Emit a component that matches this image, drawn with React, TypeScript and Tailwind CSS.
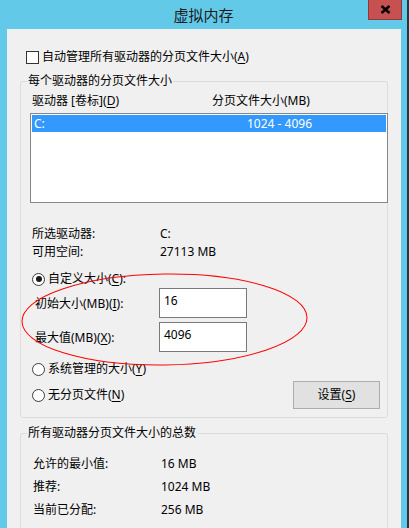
import React from "react";

const U = ({ c }: { c: string }) => <span className="underline underline-offset-[2px] decoration-1">{c}</span>;

function Radio({ checked }: { checked?: boolean }) {
  return (
    <span className="w-[13px] h-[13px] rounded-full border border-[#3c3c3c] bg-white flex items-center justify-center shrink-0">
      {checked && <span className="w-[6px] h-[6px] rounded-full bg-[#1a1a1a]" />}
    </span>
  );
}

export default function App() {
  return (
    <div className="relative w-[409px] h-[528px] overflow-hidden bg-[#63c9e9] border-r-2 border-[#26343d] flex flex-col text-[12px] leading-[16px] text-black font-['Noto_Sans','Noto_Sans_CJK_SC',sans-serif]">
      {/* title bar */}
      <div className="h-[29px] shrink-0 flex items-center justify-center text-[15px] text-[#1b1b1b] font-['Noto_Sans_CJK_SC',sans-serif]">
        虚拟内存
      </div>
      <div className="absolute top-0 right-[5px] w-[34px] h-[20px] bg-[#c75050] border border-t-0 border-[#8c3a3a] flex items-center justify-center">
        <svg width="11" height="9" viewBox="0 0 11 9">
          <path d="M1.5 1 L9.5 8 M9.5 1 L1.5 8" stroke="#000" strokeWidth="2.4" strokeLinecap="butt" />
        </svg>
      </div>

      {/* body */}
      <div className="ml-[7px] w-[394px] flex-1 bg-[#f0f0f0] pt-[20px] flex flex-col">
        <div className="h-[16px] flex items-center pl-[19px]">
          <span className="w-[13px] h-[13px] border border-[#333] bg-white shrink-0" />
          <span className="ml-[3px]">
            自动管理所有驱动器的分页文件大小(<U c="A" />)
          </span>
        </div>

        {/* group 1 */}
        <div className="relative mt-[16px] ml-[13px] w-[368px] h-[337px] shrink-0 border border-[#dcdcdc] rounded-[3px] pl-[9px] pt-[11px] flex flex-col">
          <div className="absolute left-[6px] top-[-9px] bg-[#f0f0f0] px-[1px] leading-[16px]">每个驱动器的分页文件大小</div>

          <div className="h-[16px] flex items-center">
            <span className="ml-[2px] w-[180px]">
              驱动器 [卷标](<U c="D" />)
            </span>
            <span>分页文件大小(MB)</span>
          </div>

          <div className="mt-[4px] w-[358px] h-[90px] border border-[#828790] bg-white p-[1px]">
            <div className="h-[17px] bg-[#3399ff] text-white flex items-center">
              <span className="pl-[2px] w-[215px]">C:</span>
              <span>1024 - 4096</span>
            </div>
          </div>

          <div className="mt-[22px] h-[18px] flex items-center">
            <span className="ml-[2px] w-[128px]">所选驱动器:</span>
            <span>C:</span>
          </div>
          <div className="h-[18px] flex items-center">
            <span className="ml-[2px] w-[128px]">可用空间:</span>
            <span>27113 MB</span>
          </div>

          <div className="mt-[9px] h-[18px] flex items-center">
            <span className="ml-[2px]">
              <Radio checked />
            </span>
            <span className="ml-[3px]">
              自定义大小(<U c="C" />):
            </span>
          </div>

          <div className="h-[30px] flex items-center">
            <span className="ml-[5px] w-[124px] pt-[2px]">
              初始大小(MB)(<U c="I" />):
            </span>
            <div className="w-[88px] h-[30px] border border-[#7a7a7a] bg-white px-[4px] pt-[4px]">16</div>
          </div>
          <div className="mt-[4px] h-[30px] flex items-center">
            <span className="ml-[5px] w-[124px] pt-[2px]">
              最大值(MB)(<U c="X" />):
            </span>
            <div className="w-[88px] h-[30px] border border-[#7a7a7a] bg-white px-[4px] pt-[4px]">4096</div>
          </div>

          <div className="mt-[8px] h-[18px] flex items-center">
            <span className="ml-[2px]">
              <Radio />
            </span>
            <span className="ml-[3px]">
              系统管理的大小(<U c="Y" />)
            </span>
          </div>

          <div className="mt-[3px] h-[28px] flex items-center">
            <span className="ml-[2px]">
              <Radio />
            </span>
            <span className="ml-[3px]">
              无分页文件(<U c="N" />)
            </span>
            <button className="ml-auto mr-[7px] w-[87px] h-[28px] bg-[#e1e1e1] border border-[#adadad] flex items-center justify-center text-[12px] leading-[16px]">
              <span>
                设置(<U c="S" />)
              </span>
            </button>
          </div>
        </div>

        {/* group 2 */}
        <div className="relative mt-[15px] ml-[13px] w-[368px] h-[120px] shrink-0 border border-[#dcdcdc] rounded-[3px] pl-[9px] pt-[18px] flex flex-col">
          <div className="absolute left-[6px] top-[-9px] bg-[#f0f0f0] px-[1px] leading-[16px]">所有驱动器分页文件大小的总数</div>
          <div className="h-[23px] flex items-center">
            <span className="ml-[3px] w-[128px]">允许的最小值:</span>
            <span>16 MB</span>
          </div>
          <div className="h-[23px] flex items-center">
            <span className="ml-[3px] w-[128px]">推荐:</span>
            <span>1024 MB</span>
          </div>
          <div className="h-[23px] flex items-center">
            <span className="ml-[3px] w-[128px]">当前已分配:</span>
            <span>256 MB</span>
          </div>
        </div>
      </div>

      {/* red annotation ellipse */}
      <svg className="absolute left-0 top-0 pointer-events-none" width="409" height="528" viewBox="0 0 409 528">
        <ellipse cx="164.5" cy="319.5" rx="142.5" ry="45.5" transform="rotate(-0.8 164.5 319.5)" fill="none" stroke="#ff0000" strokeWidth="1" />
      </svg>
    </div>
  );
}
